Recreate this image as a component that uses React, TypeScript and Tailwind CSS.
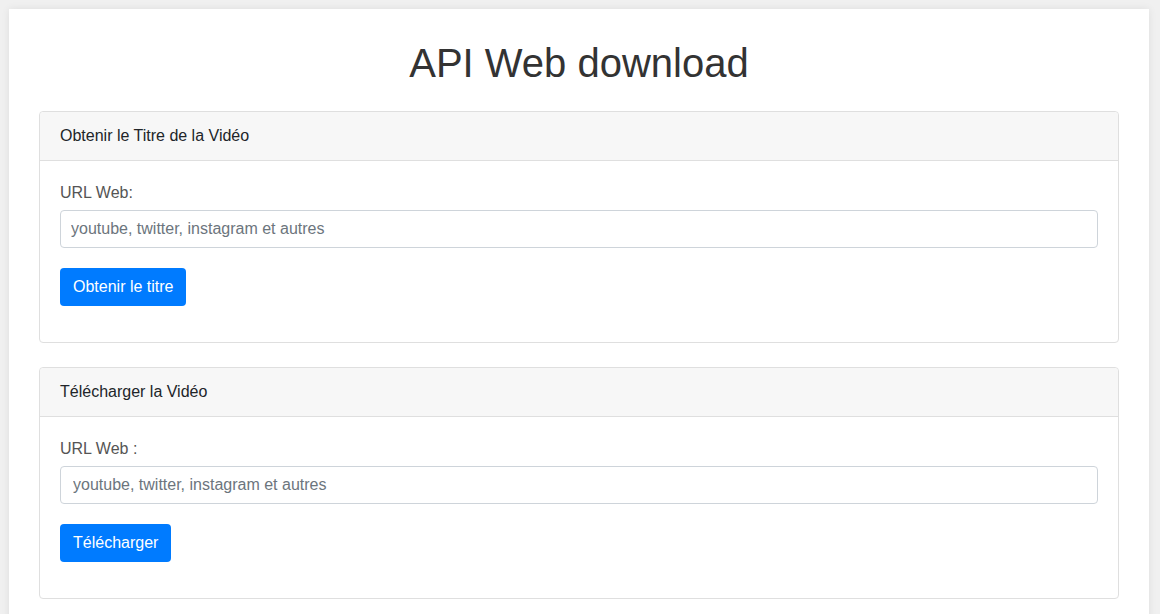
import React from "react";

interface CardProps {
  title: string;
  label: string;
  button: string;
  inputPad: string;
}

const Card = ({ title, label, button, inputPad }: CardProps) => {
  return (
    <div className="border border-[#dfdfdf] rounded-[4px] bg-white">
      <div className="px-5 py-3 leading-6 text-[#212529] bg-[#f7f7f7] border-b border-[#dfdfdf] rounded-t-[4px]">
        {title}
      </div>
      <div className="p-5">
        <label className="block leading-6 mb-[5px] text-[#555]">{label}</label>
        <input
          type="text"
          placeholder="youtube, twitter, instagram et autres"
          className={`block w-full h-[38px] ${inputPad} border border-[#ced4da] rounded-[4px] text-[#495057] placeholder:text-[#6c757d] outline-none`}
        />
        <button className="mt-5 mb-4 h-[38px] px-[13px] bg-[#007bff] text-white rounded-[4px] leading-6">
          {button}
        </button>
      </div>
    </div>
  );
};

const App = () => {
  return (
    <div
      className="min-h-[614px] bg-[#f0f0f0] pt-[9px] pl-[9px] text-base"
      style={{ fontFamily: '"Liberation Sans", Arial, sans-serif' }}
    >
      <div className="w-[1140px] min-h-[605px] bg-white p-[30px] shadow-[0_0_8px_rgba(0,0,0,0.08)]">
        <h1 className="text-[40px] leading-[48px] text-center text-[#333] mb-6">API Web download</h1>
        <div className="flex flex-col gap-6">
          <Card
            title="Obtenir le Titre de la Vidéo"
            label="URL Web:"
            button="Obtenir le titre"
            inputPad="px-[10px]"
          />
          <Card
            title="Télécharger la Vidéo"
            label="URL Web :"
            button="Télécharger"
            inputPad="px-3"
          />
        </div>
      </div>
    </div>
  );
};

export default App;
